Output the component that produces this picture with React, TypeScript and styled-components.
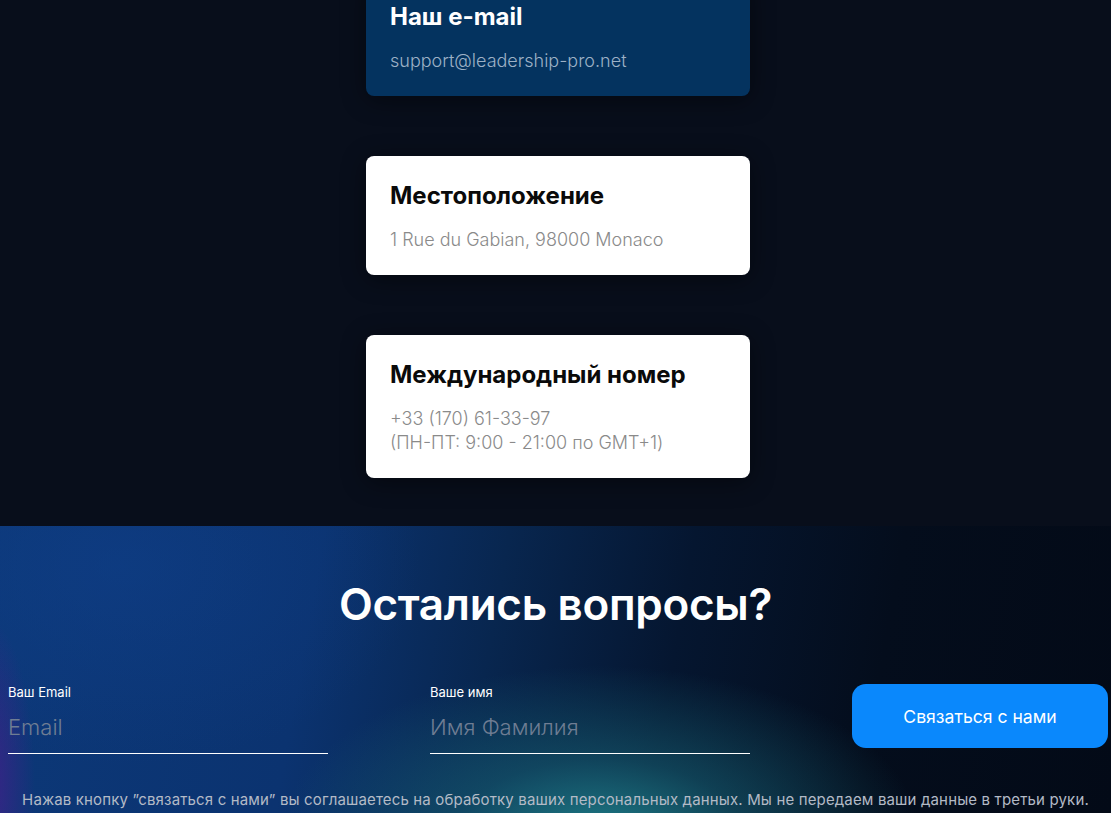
import React from "react";
import styled, { createGlobalStyle } from "styled-components";

const GlobalStyle = createGlobalStyle`
  body {
    margin: 0;
    background: #080e1b;
    font-family: Inter, "Noto Sans", sans-serif;
    overflow: hidden;
  }
`;

const Page = styled.div`
  width: 1111px;
  min-height: 813px;
  background: #080e1b;
`;

const Contacts = styled.section`
  display: flex;
  flex-direction: column;
  align-items: center;
  gap: 60px;
  padding: 0 0 48px 5px;
  margin-top: -23px;
`;

const Card = styled.div<{ $dark?: boolean }>`
  box-sizing: border-box;
  width: 384px;
  padding: 25px 24px 23px;
  border-radius: 8px;
  background: ${(p) => (p.$dark ? "#04335f" : "#ffffff")};
  box-shadow: 0 4px 24px rgba(0, 0, 0, 0.45);
`;

const CardTitle = styled.h3<{ $dark?: boolean }>`
  margin: 0 0 17px;
  font-size: 24px;
  line-height: 30px;
  font-weight: 700;
  color: ${(p) => (p.$dark ? "#ffffff" : "#0a0a0a")};
`;

const CardText = styled.p<{ $dark?: boolean }>`
  margin: 0;
  font-size: 18px;
  line-height: 24px;
  font-weight: 300;
  color: ${(p) => (p.$dark ? "#9db1c6" : "#8a8a8a")};
`;

const Feedback = styled.section`
  height: 287px;
  box-sizing: border-box;
  padding: 50px 0 0 8px;
  background:
    radial-gradient(ellipse 320px 170px at 600px 310px, rgba(32, 130, 140, 0.95), rgba(24, 100, 118, 0.55) 45%, transparent 100%),
    radial-gradient(ellipse 50px 170px at -15px 260px, rgba(70, 30, 140, 0.85), transparent 100%),
    radial-gradient(ellipse 300px 200px at 120px 40px, rgba(16, 64, 140, 0.5), transparent 100%),
    linear-gradient(100deg, #0c3878 0%, #0b3370 28%, #08264f 44%, #051630 60%, #040d1c 78%, #030a17 100%);
`;

const Heading = styled.h2`
  margin: 0 0 52px -8px;
  text-align: center;
  font-size: 44px;
  line-height: 56px;
  font-weight: 600;
  color: #ffffff;
  letter-spacing: -0.3px;
`;

const FormRow = styled.div`
  display: flex;
  align-items: flex-start;
  gap: 102px;
`;

const Field = styled.label`
  display: flex;
  flex-direction: column;
  width: 320px;
`;

const FieldLabel = styled.span`
  font-size: 13px;
  line-height: 16px;
  color: #ffffff;
`;

const Input = styled.input`
  box-sizing: border-box;
  margin-top: 8px;
  height: 46px;
  padding: 0 0 8px;
  border: none;
  border-bottom: 1.5px solid #ffffff;
  background: transparent;
  color: #ffffff;
  font-family: inherit;
  font-size: 22px;
  font-weight: 300;
  outline: none;
  &::placeholder {
    color: #6f7d93;
  }
`;

const Button = styled.button`
  width: 256px;
  height: 64px;
  border: none;
  border-radius: 14px;
  background: #0a88fc;
  color: #ffffff;
  font-family: inherit;
  font-size: 17.6px;
  cursor: pointer;
`;

const Note = styled.p`
  margin: 36px 0 0 -8px;
  text-align: center;
  font-size: 15px;
  line-height: 20px;
  letter-spacing: 0.15px;
  color: #b3bac6;
`;

export default function App() {
  return (
    <Page>
      <GlobalStyle />
      <Contacts>
        <Card $dark>
          <CardTitle $dark>Наш e-mail</CardTitle>
          <CardText $dark>support@leadership-pro.net</CardText>
        </Card>
        <Card>
          <CardTitle>Местоположение</CardTitle>
          <CardText>1 Rue du Gabian, 98000 Monaco</CardText>
        </Card>
        <Card>
          <CardTitle>Международный номер</CardTitle>
          <CardText>
            +33 (170) 61-33-97
            <br />
            (ПН-ПТ: 9:00 - 21:00 по GMT+1)
          </CardText>
        </Card>
      </Contacts>
      <Feedback>
        <Heading>Остались вопросы?</Heading>
        <FormRow>
          <Field>
            <FieldLabel>Ваш Email</FieldLabel>
            <Input placeholder="Email" />
          </Field>
          <Field>
            <FieldLabel>Ваше имя</FieldLabel>
            <Input placeholder="Имя Фамилия" />
          </Field>
          <Button>Связаться с нами</Button>
        </FormRow>
        <Note>
          Нажав кнопку ”связаться с нами” вы соглашаетесь на обработку ваших персональных данных. Мы не передаем ваши данные в третьи руки.
        </Note>
      </Feedback>
    </Page>
  );
}
